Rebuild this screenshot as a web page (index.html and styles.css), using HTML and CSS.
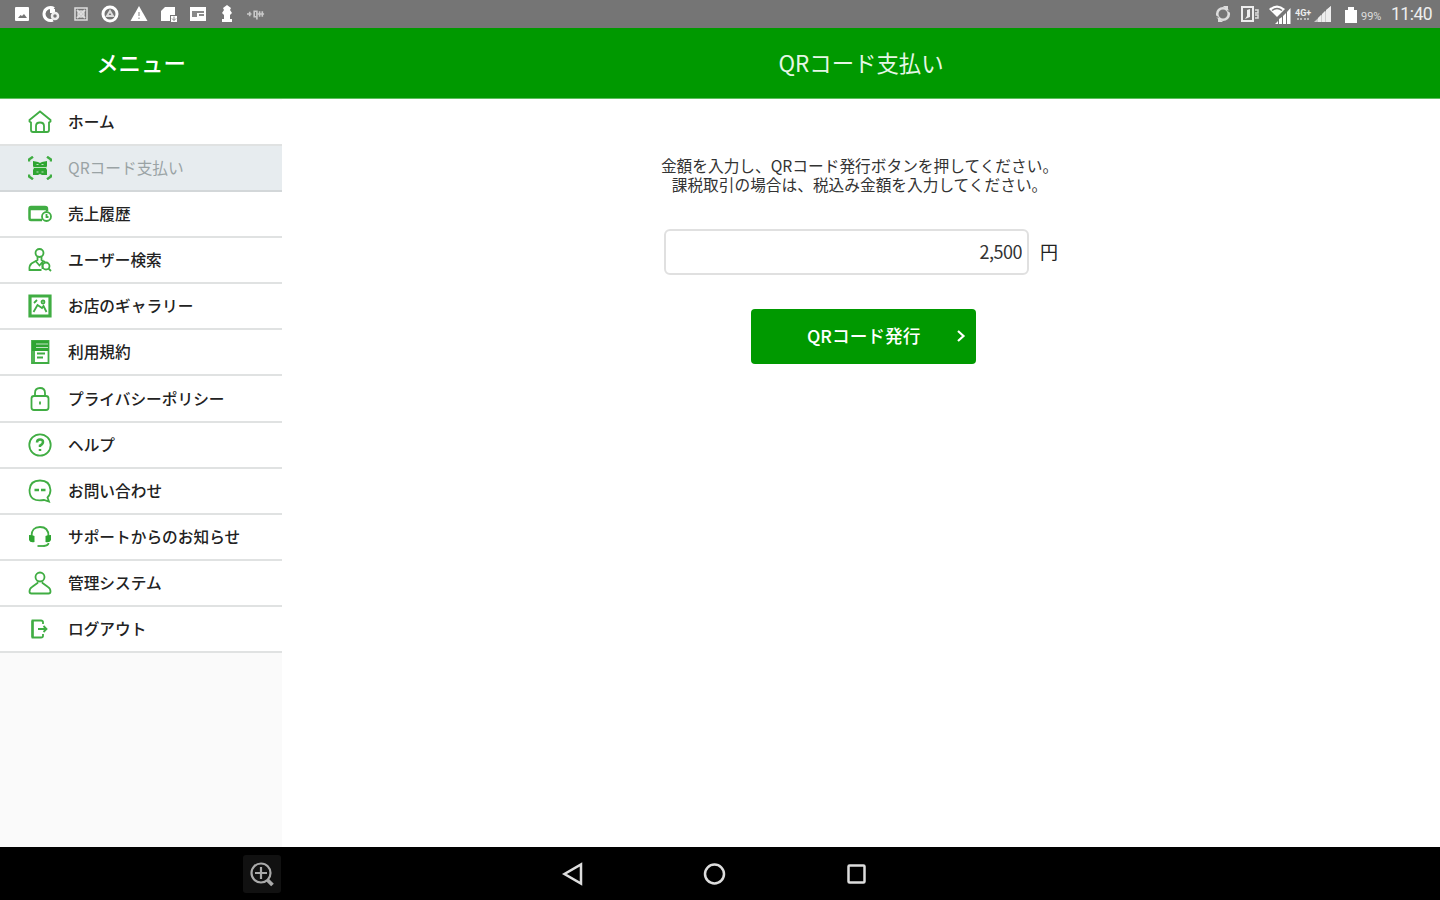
FILE: index.html
```html
<!DOCTYPE html>
<html lang="ja">

<head>
  <meta charset="UTF-8">
  <meta name="viewport" content="width=device-width, initial-scale=1.0">
  <title>QRコード支払い</title>
  <link rel="stylesheet" href="styles.css">
</head>

<body>

  <div class="statusbar">
    <div class="status-left">
      <svg viewBox="0 0 18 18"><path fill="#fff" fill-rule="evenodd" d="M3 2h12q1 0 1 1v12q0 1-1 1H3q-1 0-1-1V3q0-1 1-1zM5 13h9l-3-4-2 2-1.500-1z"/></svg>
      <svg viewBox="0 0 18 18"><path d="M12 3.500A6.500 6.500 0 1 0 11 15" fill="none" stroke="#fff" stroke-width="3"/><path fill="#fff" d="M8 4h5v4H8z"/><circle cx="13" cy="11" r="3" fill="none" stroke="#eee" stroke-width="2.500"/></svg>
      <svg viewBox="0 0 18 18" fill="none" stroke="#ddd"><rect x="3" y="3" width="12" height="12" stroke-width="1.500"/><path d="M5 5l8 8M13 5l-8 8" stroke-width="2"/><circle cx="9" cy="9" r="3" stroke-width="1.500"/></svg>
      <svg viewBox="0 0 18 18"><circle cx="9" cy="9" r="7" fill="none" stroke="#fff" stroke-width="3"/><path d="M9 6l3 5H6z" fill="none" stroke="#ddd" stroke-width="2"/></svg>
      <svg viewBox="0 0 18 18"><path fill="#fff" d="M9 1l8.500 15H.5z"/><path d="M9 7v4M9 12.500v1.500" stroke="#aaa" stroke-width="1.500"/></svg>
      <svg viewBox="0 0 18 18"><path fill="#fff" d="M6 2h10v8h-5v6H2V6z"/><path fill="#fff" d="M12 11h6v6h-6z"/><path d="M15 11.500v4M13 13.500l2 2 2-2" stroke="#888" fill="none"/></svg>
      <svg viewBox="0 0 18 18"><path fill="#fff" d="M1 2h16v14H1z"/><path fill="#8a8a8a" d="M3 6h12v2H3zM3 8h5v4H3zM10 9h5v2h-5z"/></svg>
      <svg viewBox="0 0 18 18"><path fill="#fff" d="M9 0l4 3-1 2 2 3-2 2v4h2v3H4v-3h2v-4L4 8l2-3-1-2z"/></svg>
      <svg viewBox="0 0 20 18" fill="none" stroke="#c8c8c8" stroke-width="1.800"><path d="M0 9h5M3 6.500v5M8 6v6h3V6zM14 6v6M17 6v6M12 9h7M11 12v3"/></svg>
    </div>
    <div class="status-right">
      <svg class="sync" viewBox="0 0 18 18"><circle cx="9" cy="9" r="5.800" fill="none" stroke="#ddd" stroke-width="2.600"/><path fill="#ddd" d="M9 1h5v5zM9 17H4v-5z"/><path d="M13.500 5.500l3 1.500M4.500 12.500l-3-1.500" stroke="#757575" stroke-width="1.300"/></svg>
      <svg class="vibrate" viewBox="0 0 20 18"><path d="M2 2h11v14H2z" fill="none" stroke="#eee" stroke-width="2"/><path d="M5 14l5-2V4L7 5v6z" fill="#eee"/><path d="M15 5h3v3h-3M15 10h3v3h-3" fill="none" stroke="#ddd" stroke-width="1.500"/></svg>
      <svg class="wifi" viewBox="0 0 24 22"><path d="M1 6Q9-1 17 6L9 14z" fill="#fff"/><path d="M4 7.500q5-4 10 0" fill="none" stroke="#777" stroke-width="1.500"/><path d="M6 21v-3l17-15v18z" fill="#757575"/><path d="M7 21h3v-3zM11 21h3v-7l-3 2zM15 21h3V10l-3 3zM19 21h3.500V5L19 9z" fill="#fff"/></svg>
      <span class="lte">4G+<i></i></span>
      <svg class="signal" viewBox="0 0 18 17"><path fill="#ccc" d="M0 16L17 0v16z"/><path fill="#eee" d="M4 16h3V9L4 12zM8 16h3V5L8 8zM12 16h5V0l-5 4z"/></svg>
      <svg class="battery" viewBox="0 0 12 16"><path fill="#fff" d="M3 0h6v3h3v13H0V3h3z"/></svg>
      <span class="percent">99%</span>
      <span class="clock">11:40</span>
    </div>
  </div>

  <header>
    <div class="menu-title">メニュー</div>
    <h1>QRコード支払い</h1>
  </header>

  <div class="content">
    <nav>
      <ul class="menu">
        <li>
          <svg viewBox="0 0 24 24"><path d="M1.500 10L12 1.500 22.500 10v1.500l-1.500 1v7.500q0 2-2 2H5q-2 0-2-2v-7.500l-1.500-1z"/><path d="M8 21.500V16q0-3.500 4-3.500t4 3.500v5.500"/></svg>
          <span>ホーム</span>
        </li>
        <li class="active">
          <svg viewBox="0 0 24 24"><path class="heavy" d="M1 5.500V3.500L5 .8M19 .8l4 2.700v2M1 18.500v2l4 2.700M19 23.200l4-2.700v-2"/><path class="solid" d="M5 5l5 1 2 1 2-1 5-1v5l-1 2 1 2v5h-5l-2-1-2 1H5v-5l1-2-1-2z"/><path class="gap" d="M5 11.500h14M8.500 8.500h2M13.500 8.500h2M8.500 16h2M13.500 16h2"/></svg>
          <span>QRコード支払い</span>
        </li>
        <li>
          <svg viewBox="0 0 24 24"><path class="heavy" d="M14 18H3q-1.500 0-1.500-2V7q0-2 1.500-2h14q2 0 2 2v2M1 7h18"/><circle cx="18.500" cy="14.500" r="4.500"/><path d="M18.500 12v3h2"/></svg>
          <span>売上履歴</span>
        </li>
        <li>
          <svg viewBox="0 0 24 24"><circle cx="11.500" cy="5" r="4"/><path d="M9.500 9v3L3.500 15.500q-2.500 2-2 6.500h12M13.500 9v3l3.500 2M8 13.500l3.500 4 3-3.500v7"/><circle cx="18" cy="18" r="3.500"/><path d="M20.500 20.500l2.500 2.500"/></svg>
          <span>ユーザー検索</span>
        </li>
        <li>
          <svg viewBox="0 0 24 24"><path class="frame" d="M2 2h20v20H2z"/><path d="M5.500 18l4-7 4.500 3 1.500-2 3 6M6 9l3-3"/><circle cx="15" cy="8" r="1.500"/></svg>
          <span>お店のギャラリー</span>
        </li>
        <li>
          <svg viewBox="0 0 24 24"><path d="M4 1h16.500v22H4z"/><path class="solid" d="M4 1h16.500v10H4z"/><path class="gap" d="M8 4h12M8 7.500h12"/><path d="M9 13.500h8M9 17.500h6M6 11v11"/></svg>
          <span>利用規約</span>
        </li>
        <li>
          <svg viewBox="0 0 24 24"><rect x="3.500" y="9" width="17" height="14" rx="2.500"/><path d="M7 9V6q0-5 5-5t5 5v3M12 14.500v3"/></svg>
          <span>プライバシーポリシー</span>
        </li>
        <li>
          <svg viewBox="0 0 24 24"><circle cx="12" cy="12" r="10.700"/><path class="heavy" d="M9 9.500q0-3 3-3t3 2.500q0 2-3 3.500v1.500M12 16v2"/></svg>
          <span>ヘルプ</span>
        </li>
        <li>
          <svg viewBox="0 0 24 24"><path d="M19.500 18.500l1.500 4-5-1.500Q1.500 23.500 1.500 11 2 1.500 12 1.500t10.500 9.500q0 4.500-3 7.500z"/><path class="heavy" d="M6.500 11h4.500M13 11h4.500"/></svg>
          <span>お問い合わせ</span>
        </li>
        <li>
          <svg viewBox="0 0 24 24"><path d="M3.500 11q0-9 8.500-9t8.500 9M20.500 18q0 2.500-5 3"/><path class="solid" d="M1 10q4 0 5.500 1v6q-4.500 1-5.500-2zM23 10q-4 0-5.500 1v6q4.500 1 5.500-2z"/><path d="M9.500 21h7"/></svg>
          <span>サポートからのお知らせ</span>
        </li>
        <li>
          <svg viewBox="0 0 24 24"><circle cx="12" cy="6" r="4.500"/><path d="M9.500 10.500v1.500L4 16q-2.500 1.500-2.500 4.500 0 2 2 2h17q2 0 2-2 0-3-2.500-4.500l-5.500-4v-1.500"/></svg>
          <span>管理システム</span>
        </li>
        <li>
          <svg viewBox="0 0 24 24"><path d="M15 7V5q0-1.500-2-1.500H4.500v17H13q2 0 2-1.500v-2M10 12h8.500M15.500 9l3 3-3 3"/><path class="heavy" d="M4.500 3.500v17"/></svg>
          <span>ログアウト</span>
        </li>
      </ul>
    </nav>

    <main>
      <p class="guide">金額を入力し、QRコード発行ボタンを押してください。<br>課税取引の場合は、税込み金額を入力してください。</p>
      <div class="amount">
        <input type="text" value="2,500" aria-label="金額">
        <span>円</span>
      </div>
      <button>
        <span>QRコード発行</span>
        <svg viewBox="0 0 10 16"><path d="M2 3l5.500 5L2 13" fill="none" stroke="#fff" stroke-width="2.200"/></svg>
      </button>
    </main>
  </div>

  <footer>
    <div class="magnify">
      <svg viewBox="0 0 26 26" fill="none" stroke="#aaa" stroke-width="2.200"><circle cx="12" cy="12" r="9.500"/><path d="M12 6v12M6 12h12"/><path d="M18.500 19l5 5" stroke-width="3.800"/></svg>
    </div>
    <div class="keys">
      <svg viewBox="0 0 24 24"><path d="M21 2.500v19L4.500 12z"/></svg>
      <svg viewBox="0 0 24 24"><circle cx="12.500" cy="12" r="9.500"/></svg>
      <svg viewBox="0 0 24 24"><rect x="4.500" y="3.500" width="16" height="17" rx="1"/></svg>
    </div>
  </footer>

</body>

</html>
```
FILE: styles.css
```css
* {
  box-sizing: border-box;
}

body {
  font-family: "Noto Sans CJK JP", sans-serif;
  margin: 0;
  height: 900px;
  display: flex;
  flex-direction: column;
  overflow: hidden;
  background: #fff;
  color: #222;
}

svg {
  display: block;
  flex: none;
}

.statusbar {
  height: 28px;
  flex: none;
  background: #757575;
  color: #eee;
  display: flex;
  justify-content: space-between;
  align-items: center;
  padding: 0 8px 0 13px;
}

.status-left {
  display: flex;
  gap: 11.3px;
}

.status-left svg {
  width: 18px;
  height: 18px;
}

.status-right {
  display: flex;
  align-items: center;
  font-family: Roboto, sans-serif;
}

.sync {
  width: 18px;
  height: 18px;
  margin-right: 8px;
}

.vibrate {
  width: 20px;
  height: 18px;
  margin-right: 8px;
}

.wifi {
  width: 24px;
  height: 22px;
}

.lte {
  width: 18px;
  margin-left: 3px;
  font-size: 9px;
  line-height: 9px;
  font-weight: bold;
}

.lte i {
  display: block;
  width: 12px;
  margin: 0 2px;
  border-top: 2px dotted #bbb;
}

.signal {
  width: 18px;
  height: 17px;
  margin-left: 1px;
}

.battery {
  width: 12px;
  height: 16px;
  margin: 2px 4px 0 13px;
}

.percent {
  width: 22px;
  font-size: 11px;
  padding-top: 4px;
  color: #ddd;
}

.clock {
  width: 41px;
  margin-left: 8px;
  font-size: 17.5px;
  letter-spacing: -0.5px;
  white-space: nowrap;
}

header {
  height: 71px;
  flex: none;
  background: #090;
  color: #fff;
  display: flex;
  align-items: center;
  padding-bottom: 3px;
  text-align: center;
  border-bottom: 1px solid #5fbf5f;
}

.menu-title {
  width: 282px;
  font-size: 22.4px;
  font-weight: 500;
}

header h1 {
  flex: 1;
  margin: 0;
  font-size: 22.4px;
  font-weight: normal;
  color: #e6f7e6;
}

.content {
  height: 748px;
  flex: none;
  display: flex;
}

nav {
  width: 282px;
  background: #fafafa;
}

.menu {
  list-style: none;
  margin: 0;
  padding: 0.6px 0 0;
}

.menu li {
  height: 46.15px;
  display: flex;
  align-items: center;
  gap: 16px;
  padding: 0 0 1px 28px;
  background: #fff;
  border-bottom: 2px solid #e0e2e2;
  font-size: 15.7px;
  font-weight: 500;
  white-space: nowrap;
}

.menu li.active {
  background: #e7ecef;
  border-bottom-color: #d3d7d9;
  color: #9aa3a5;
  font-weight: normal;
}

.menu svg {
  width: 24px;
  height: 24px;
  margin-top: 1px;
  fill: none;
  stroke: #40ad43;
  stroke-width: 1.8;
}

.menu svg .heavy {
  stroke-width: 2.5;
}

.menu svg .frame {
  stroke-width: 3.2;
}

.menu svg .solid {
  fill: #2fa532;
  stroke: none;
}

.menu svg .gap {
  stroke: #bfe2c1;
  stroke-width: 1.2;
}

main {
  flex: 1;
  display: flex;
  flex-direction: column;
  align-items: center;
}

.guide {
  margin: 58px 3px 0 0;
  font-size: 15.7px;
  line-height: 18.5px;
  text-align: center;
  color: #333;
}

.amount {
  display: flex;
  align-items: center;
  gap: 11px;
  margin: 35px 0 0;
  font-size: 18px;
}

.amount input {
  width: 365px;
  height: 46px;
  padding: 0 5px 2px;
  border: 2px solid #e0e0e0;
  border-radius: 6px;
  background: #fff;
  font-family: inherit;
  font-size: 18px;
  text-align: right;
  letter-spacing: -0.5px;
  color: #333;
}

.amount span {
  padding-bottom: 2px;
}

button {
  width: 225px;
  height: 55px;
  margin: 34px 0 0 5px;
  padding: 0 10px 1px 56px;
  display: flex;
  align-items: center;
  justify-content: space-between;
  background: #090;
  color: #fff;
  border: none;
  border-radius: 4px;
  font-family: inherit;
  font-size: 17.7px;
  font-weight: 500;
  white-space: nowrap;
}

button span {
  padding-bottom: 2px;
}

button svg {
  width: 10px;
  height: 16px;
}

footer {
  height: 53px;
  flex: none;
  background: #000;
  display: flex;
  align-items: center;
  padding-left: 243px;
}

.magnify {
  width: 38px;
  height: 38px;
  background: #111;
  border-radius: 3px;
  display: flex;
  align-items: center;
  justify-content: center;
}

.magnify svg {
  width: 26px;
  height: 26px;
}

.keys {
  display: flex;
  gap: 118px;
  margin-left: 279px;
}

.keys svg {
  width: 24px;
  height: 24px;
  fill: none;
  stroke: #ddd;
  stroke-width: 2.5;
}
```
